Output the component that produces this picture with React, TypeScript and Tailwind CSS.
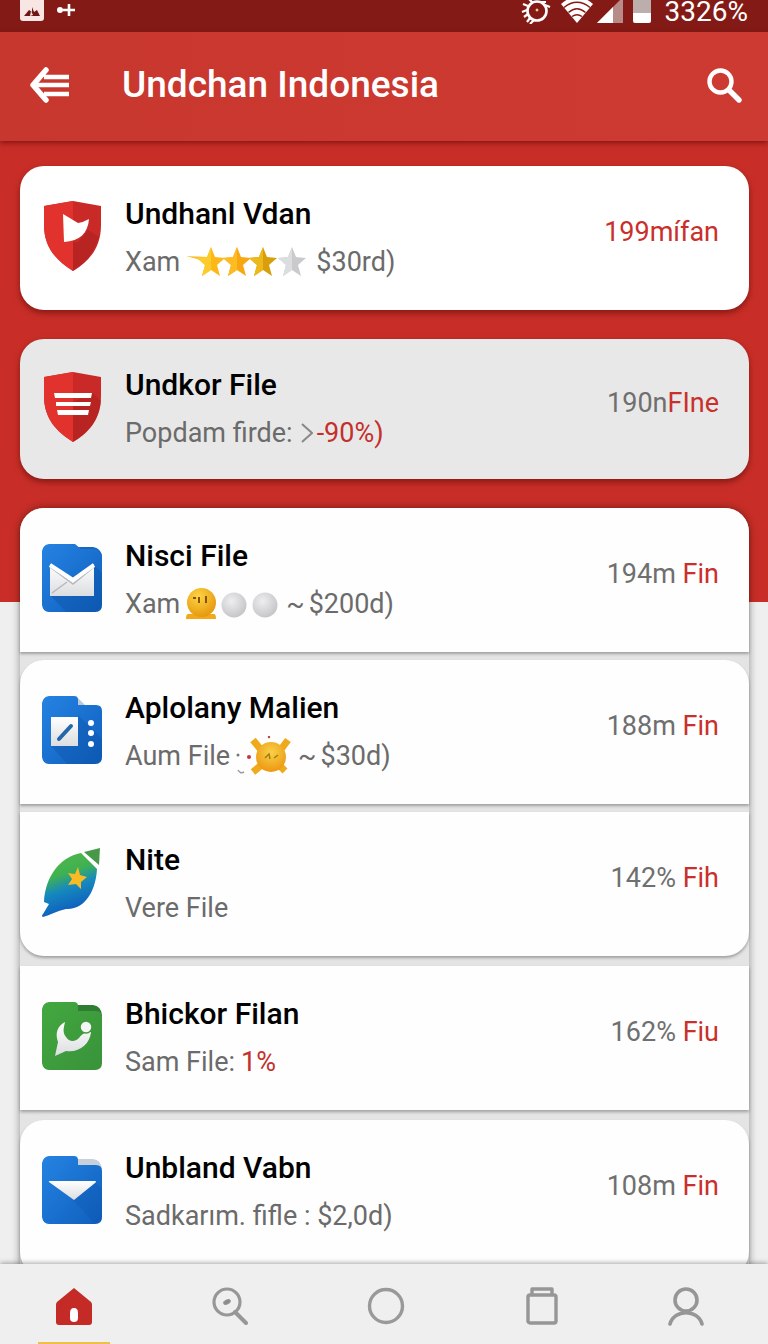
import * as React from 'react';
import { clsx } from 'clsx';

function StatusIcons() {
  return (
    <div className="flex items-start gap-2.5">
      <svg className="h-6 w-[30px]" viewBox="0 0 30 24" fill="none" stroke="#fff" strokeWidth="2.6" aria-hidden="true">
        <circle cx="16" cy="11" r="9.5" />
        <path d="M7 14 L3 17 M6 10 L1 12 M7 6 L2 4 M9 18 L6 22 M12 3 L8 -1 M24 5 L29 7 M20 2 L25 2 M13 20 L9 24" strokeWidth="2.2" />
        <circle cx="16" cy="10" r="1" fill="#ffd9a0" stroke="#ffd9a0" strokeWidth="1" />
      </svg>
      <svg className="h-6 w-8" viewBox="0 0 32 24" fill="none" aria-hidden="true">
        <path d="M0 4 Q16 -10 32 4 L16 23 Z" fill="#fff" />
        <path d="M3 7.5 Q16 -3 29 7.5 M7.5 12.5 Q16 5 24.5 12.5 M11 16.5 Q16 13 21 16.5" stroke="#841a16" strokeWidth="1.5" />
      </svg>
      <svg className="-ml-1.5 h-6 w-[26px]" viewBox="0 0 26 24" aria-hidden="true">
        <path d="M0 23 L26 -3 V23 Z" fill="#b98b88" />
        <path d="M0 23 L16 7 V23 Z" fill="#fff" />
      </svg>
      <svg className="h-6 w-[18px]" viewBox="0 0 18 24" aria-hidden="true">
        <path d="M0 0 H18 V13 H0 Z" fill="#bcaead" />
        <path d="M0 13 H18 V21 Q18 23 16 23 H2 Q0 23 0 21 Z" fill="#fff" />
      </svg>
    </div>
  );
}

function ShieldIcon({ variant }: { variant: 'flag' | 'lines' }) {
  return (
    <svg className="h-[72px] w-[60px]" viewBox="0 0 60 72" aria-hidden="true">
      <path d="M31 1 L59 6 V25 C59 49 46 62 31 71 C15 61 2 48 2 25 V6 Z" fill="#c92a27" />
      <path d="M31 1 L2 6 V25 C2 48 15 61 31 71 Z" fill="#e2322e" />
      {variant === 'flag' ? (
        <>
          <path d="M36 42 L46 30 L57 37 C52 53 44 63 31 71 V42 Z" fill="#ab211f" opacity=".6" />
          <path d="M21 14 L36 23 Q42 22 47 19 C46 33 38 41 22 42 Z" fill="#fff" />
        </>
      ) : (
        <>
          <path d="M31 31 L51 22 L59 30 C57 50 46 62 31 71 Z" fill="#ab211f" opacity=".6" />
          <path d="M12 22 H50 L49 27 H13 Z M14 31 H49 L48 35 H14 Z M15 39 H47 L46 44 H16 Z" fill="#fff" />
        </>
      )}
    </svg>
  );
}

function FolderIcon({ variant }: { variant: 'mail' | 'edit' | 'call' | 'drop' }) {
  const green = variant === 'call';
  const id = `folder-${variant}`;
  return (
    <svg className="h-[70px] w-[60px]" viewBox="0 0 60 70" aria-hidden="true">
      <defs>
        <linearGradient id={id} x1="0" y1="0" x2="1" y2="1">
          <stop offset="0" stopColor={green ? '#43a83f' : '#2583e2'} />
          <stop offset="1" stopColor={green ? '#38923a' : '#0f5fbd'} />
        </linearGradient>
        <linearGradient id={`${id}-paper`} x1="0" y1="0" x2="0" y2="1">
          <stop offset="0" stopColor="#fff" />
          <stop offset="1" stopColor="#dcdde0" />
        </linearGradient>
      </defs>
      {variant === 'edit' ? (
        <path d="M34 1 L43 10 H34 Z" fill="#b9c9da" />
      ) : (
        <path
          d="M34 4 H51 Q59 5 60 14 V20 H34 Z"
          fill={variant === 'drop' ? '#c8d0da' : green ? '#2f7d31' : '#1767bd'}
        />
      )}
      <path
        d={
          variant === 'mail'
            ? 'M7 1 H33 L39 6 H53 Q60 7 60 14 V62 Q60 69 53 69 H7 Q1 69 0 62 V8 Q1 2 7 1 Z'
            : 'M7 1 H32 Q36 1 36 5 V10 H54 Q60 10 60 16 V62 Q60 69 53 69 H7 Q1 69 0 62 V8 Q1 2 7 1 Z'
        }
        fill={`url(#${id})`}
      />
      {variant === 'mail' && (
        <>
          <path d="M9 53 L24 69 H53 Q60 69 60 62 V30 L52 22 V53 Z" fill="#0b4d9f" opacity=".35" />
          <path d="M8 21 L31 37 L52 21 V53 H8 Z" fill={`url(#${id}-paper)`} />
          <path d="M10 50 L25 39 M8 24 L31 41 L52 24" stroke="#b6b8bd" strokeWidth="1.5" fill="none" />
          <path d="M8 22 L31 37 L52 22" stroke="#fff" strokeWidth="4" fill="none" />
        </>
      )}
      {variant === 'edit' && (
        <>
          <path d="M9 51 L25 69 H53 Q60 69 60 62 V44 L36 20 V51 Z" fill="#0b4d9f" opacity=".3" />
          <path d="M9 22 H36 V51 H9 Z" fill={`url(#${id}-paper)`} />
          <path d="M17 44 L29 31" stroke="#2466aa" strokeWidth="4" strokeLinecap="round" />
          <g fill="#fff">
            <circle cx="49" cy="28" r="3" />
            <circle cx="49" cy="38" r="3" />
            <circle cx="49" cy="49" r="3" />
          </g>
        </>
      )}
      {variant === 'call' && (
        <>
          <path d="M23 21 C15 25 13 33 16 41 L13 55 L24 50 C37 52 48 43 49 31 C43 31 41 32 37 37 C33 41 27 41 24 36 C20 31 22 26 23 21 Z" fill={`url(#${id}-paper)`} />
          <circle cx="44" cy="26" r="6" fill="#f4f5f5" stroke="#3d9a3c" strokeWidth="1.5" />
        </>
      )}
      {variant === 'drop' && (
        <>
          <path d="M31 45 L54 28 L60 34 V62 Q60 69 53 69 L31 45 Z" fill="#0b4d9f" opacity=".2" />
          <path d="M7 27 Q6 26 8 26 H53 Q55 26 53 28 L32 45 Z" fill={`url(#${id}-paper)`} />
        </>
      )}
    </svg>
  );
}

function LeafIcon() {
  return (
    <svg className="h-[70px] w-[60px]" viewBox="0 0 60 70" aria-hidden="true">
      <defs>
        <linearGradient id="leaf" x1=".3" y1="0" x2=".6" y2="1">
          <stop offset="0" stopColor="#52b748" />
          <stop offset=".32" stopColor="#3fb152" />
          <stop offset=".55" stopColor="#1689be" />
          <stop offset="1" stopColor="#0c51bd" />
        </linearGradient>
      </defs>
      <path d="M39 6 L55 22 C54 42 44 63 24 62 C15 64 8 68 1 70 Q-1 69 1 67 L7 57 L2 55 C3 31 17 10 39 6 Z" fill="url(#leaf)" />
      <path d="M42 5 L58 1 L57 18 Z" fill="#48984a" />
      <path d="M36 20 L38 28 L45 30 L39 35 L39 42 L34 37 L26 38 L30 32 L26 26 L33 27 Z" fill="#f8bb25" />
    </svg>
  );
}

function Stars() {
  const star = 'M14 0 L18 10 L28 11 L20 18 L23 29 L14 23 L5 29 L8 18 L0 11 L10 10 Z';
  return (
    <svg className="mr-2 ml-1.5 h-[30px] w-[122px]" viewBox="0 0 122 30" role="img" aria-label="3 of 4 stars">
      <path d="M0 9 L22 10 L18 14 Z" fill="#fbc02d" />
      <g transform="translate(11 0)">
        <path d={star} fill="#fbb817" />
        <path d="M14 0 L14 23 L5 29 L8 18 L0 11 L10 10 Z" fill="#fecb2c" />
      </g>
      <g transform="translate(37 0)">
        <path d={star} fill="#f9a711" />
        <path d="M14 0 L14 23 L5 29 L8 18 L0 11 L10 10 Z" fill="#fdbb24" />
      </g>
      <g transform="translate(63 0)">
        <path d={star} fill="#d99e0b" />
        <path d="M14 0 L14 23 L5 29 L8 18 L0 11 L10 10 Z" fill="#ecb81b" />
      </g>
      <g transform="translate(92 0)">
        <path d={star} fill="#c9cacc" />
        <path d="M14 0 L14 23 L5 29 L8 18 L0 11 L10 10 Z" fill="#dcdddf" />
      </g>
    </svg>
  );
}

function FaceAndDots() {
  return (
    <svg className="mr-2 ml-1.5 h-8 w-[92px]" viewBox="0 0 92 32" aria-hidden="true">
      <defs>
        <radialGradient id="face" cx=".4" cy=".3" r=".8">
          <stop offset="0" stopColor="#fdd545" />
          <stop offset="1" stopColor="#e39008" />
        </radialGradient>
        <radialGradient id="dot" cx=".4" cy=".35" r=".7">
          <stop offset="0" stopColor="#eeeef0" />
          <stop offset="1" stopColor="#c3c3c7" />
        </radialGradient>
      </defs>
      <path d="M2 26 H28 Q30 26 30 31 H0 Q0 26 2 26 Z" fill="#f2a81c" />
      <circle cx="15.5" cy="14.5" r="14.5" fill="url(#face)" />
      <path d="M7 10 H10 M13 9 V15 M20 8 V15" stroke="#8a5208" strokeWidth="2" />
      <circle cx="48" cy="17" r="12.5" fill="url(#dot)" />
      <circle cx="79" cy="17" r="12.5" fill="url(#dot)" />
    </svg>
  );
}

function Critter() {
  return (
    <svg className="mr-1.5 ml-1.5 h-10 w-14" viewBox="0 0 56 40" aria-hidden="true">
      <defs>
        <radialGradient id="critter" cx=".5" cy=".35" r=".7">
          <stop offset="0" stopColor="#f7d24a" />
          <stop offset="1" stopColor="#ee920c" />
        </radialGradient>
      </defs>
      <path d="M17 4 L30 20 M52 4 L40 20 M17 36 L29 26 M49 35 L40 26" stroke="#efaa1c" strokeWidth="7" />
      <circle cx="35" cy="21" r="15" fill="url(#critter)" />
      <path d="M29 22 L33 18 L34 23 M38 22 L42 19" stroke="#a97c0b" strokeWidth="1.5" fill="none" />
      <circle cx="13" cy="21" r="2" fill="#c8304b" />
      <circle cx="33" cy="1" r="1.2" fill="#b7453b" />
      <circle cx="2" cy="19" r="1.5" fill="#777" />
      <path d="M2 34 Q4 38 8 36" stroke="#999" strokeWidth="1.5" fill="none" />
    </svg>
  );
}

type Row = {
  title: string;
  icon: React.ReactNode;
  detail: React.ReactNode;
  amount: string;
  unit: string;
};

const featured: Row[] = [
  {
    title: 'Undhanl Vdan',
    icon: <ShieldIcon variant="flag" />,
    detail: (
      <>
        Xam <Stars /> $30rd)
      </>
    ),
    amount: '',
    unit: '199mífan',
  },
  {
    title: 'Undkor File',
    icon: <ShieldIcon variant="lines" />,
    detail: (
      <>
        Popdam firde:
        <svg className="mr-1 ml-2 h-6 w-3" viewBox="0 0 12 24" fill="none" stroke="#888" strokeWidth="2" aria-hidden="true">
          <path d="M1 3 L11 12 L1 21" />
        </svg>
        <span className="text-[#c4302b]">-90%)</span>
      </>
    ),
    amount: '190n',
    unit: 'FIne',
  },
];

const files: Row[] = [
  {
    title: 'Nisci File',
    icon: <FolderIcon variant="mail" />,
    detail: (
      <>
        Xam <FaceAndDots /> <span className="mr-1">~</span>$200d)
      </>
    ),
    amount: '194m',
    unit: 'Fin',
  },
  {
    title: 'Aplolany Malien',
    icon: <FolderIcon variant="edit" />,
    detail: (
      <>
        Aum File <Critter />
        <span className="mr-1">~</span>$30d)
      </>
    ),
    amount: '188m',
    unit: 'Fin',
  },
  { title: 'Nite', icon: <LeafIcon />, detail: 'Vere File', amount: '142%', unit: 'Fih' },
  {
    title: 'Bhickor Filan',
    icon: <FolderIcon variant="call" />,
    detail: (
      <>
        Sam File:<span className="ml-1.5 text-[#c4302b]">1%</span>
      </>
    ),
    amount: '162%',
    unit: 'Fiu',
  },
  {
    title: 'Unbland Vabn',
    icon: <FolderIcon variant="drop" />,
    detail: <span>Sadkarım. fifle : $2,0d)</span>,
    amount: '108m',
    unit: 'Fin',
  },
];

// the last card runs on below the bottom bar
const fileShapes = [
  'min-h-36 rounded-t-3xl',
  'min-h-36 rounded-t-3xl',
  'min-h-36 rounded-b-3xl',
  'min-h-36 mt-2.5',
  'min-h-[156px] mt-2.5 -mb-3 pb-3 rounded-3xl',
];

function Card({ row, className }: { row: Row; className?: string }) {
  return (
    <li className={clsx('flex items-center pr-[30px] pl-[22px]', className)}>
      <div className="mb-1 shrink-0">{row.icon}</div>
      <div className="ml-[23px] min-w-0 flex-1">
        <h2 className="text-[30px] leading-12 font-medium text-black">{row.title}</h2>
        <p className="flex items-center text-[27px] leading-12 whitespace-nowrap text-[#6b6b6b]">{row.detail}</p>
      </div>
      <p className="mb-3 text-[27px] leading-8 whitespace-nowrap text-[#c9302c]">
        {row.amount && <span className="text-[#6f6f6f]">{row.amount}</span>}
        {row.amount && row.unit !== 'FIne' && ' '}
        {row.unit}
      </p>
    </li>
  );
}

function BottomNav() {
  const item = 'flex h-20 w-20 flex-col items-center justify-center';
  return (
    <nav className="z-10 flex h-20 shrink-0 items-center justify-between bg-[#efefef] pr-[54px] pl-[34px] shadow-[0_-1px_5px_rgba(0,0,0,0.35)]">
      <a href="#home" aria-label="Home" className={clsx(item, 'relative')}>
        <svg className="mt-1.5 h-10 w-9" viewBox="0 0 36 40" aria-hidden="true">
          <path d="M18 1 L35 15 Q36 16 36 18 V35 Q36 38 33 38 H3 Q0 38 0 35 V18 Q0 16 1 15 Z" fill="#c52b26" />
          <path d="M14 26 Q14 21 18 21 Q22 21 22 26 V31 Q22 35 18 35 Q14 35 14 31 Z" fill="#fff" />
        </svg>
        <span className="absolute bottom-0 h-0.5 w-[72px] bg-[#eec04a]" />
      </a>
      <a href="#search" aria-label="Search" className={item}>
        <svg className="mt-1 h-10 w-9" viewBox="0 0 36 40" fill="none" stroke="#979797" strokeWidth="3.2" strokeLinecap="round" aria-hidden="true">
          <circle cx="15" cy="16" r="13" />
          <path d="M23 26 L34 37" strokeWidth="4" />
          <ellipse cx="15" cy="16" rx="3.5" ry="2" transform="rotate(-25 15 16)" fill="#8a8a8a" strokeWidth="1" />
        </svg>
      </a>
      <a href="#discover" aria-label="Discover" className={item}>
        <svg className="mt-1 h-10 w-10" viewBox="0 0 40 40" fill="none" stroke="#999" strokeWidth="3.4" aria-hidden="true">
          <circle cx="20" cy="20" r="16.5" />
        </svg>
      </a>
      <a href="#library" aria-label="Library" className={item}>
        <svg className="mt-1 h-10 w-9" viewBox="0 0 36 40" fill="none" stroke="#969696" strokeWidth="3.4" strokeLinejoin="round" aria-hidden="true">
          <rect x="4" y="9" width="28" height="28" rx="2" />
          <path d="M8 9 V3 H28 V9" />
        </svg>
      </a>
      <a href="#profile" aria-label="Profile" className="flex h-20 w-14 items-center justify-center">
        <svg className="mt-1 h-10 w-10" viewBox="0 0 40 40" fill="none" stroke="#969696" strokeWidth="3.6" strokeLinecap="round" aria-hidden="true">
          <circle cx="20" cy="14" r="11" />
          <path d="M4 38 C8 23 32 23 36 38" />
        </svg>
      </a>
    </nav>
  );
}

export default function App() {
  return (
    <div className="flex min-h-screen flex-col bg-[#efefef] font-['Roboto',sans-serif]">
      <div className="flex h-8 items-start justify-between bg-[#841a16] px-5 text-white">
        <div className="flex items-start gap-3">
          <svg className="h-[21px] w-6" viewBox="0 0 24 21" aria-hidden="true">
            <path d="M0 0 H24 V18 Q24 21 21 21 H3 Q0 21 0 18 Z" fill="#f7e6e4" />
            <path d="M4 16 L9 10 L12 12 V7 L14 12 L17 10 L20 16 Z" fill="#701713" />
            <path d="M10 16 L11 11 L13 15 Z" fill="#f7e6e4" />
          </svg>
          <svg className="h-5 w-5" viewBox="0 0 20 20" aria-hidden="true">
            <circle cx="4" cy="10" r="3" fill="#fff" />
            <path d="M13 4 V16 M7 10 H19" stroke="#fff" strokeWidth="2.6" />
          </svg>
        </div>
        <div className="flex items-start gap-3.5">
          <StatusIcons />
          <span className="text-[28px] leading-6">3326%</span>
        </div>
      </div>

      <header className="z-10 flex h-[109px] items-center bg-linear-to-r from-[#c8372e] to-[#cd3a31] pr-[26px] pb-1 pl-[30px] text-white shadow-[0_2px_5px_rgba(90,0,0,0.6)]">
        <button type="button" aria-label="Back" className="shrink-0">
          <svg className="h-9 w-10" viewBox="0 0 40 36" fill="none" stroke="#fff" strokeWidth="4.6" aria-hidden="true">
            <path d="M16 3 L3 18 L16 33" strokeWidth="5.5" strokeLinecap="round" strokeLinejoin="round" />
            <path d="M14 10 H39 M4 18 H39 M14 27 H39" />
          </svg>
        </button>
        <h1 className="ml-[52px] flex-1 text-[37px] leading-12 font-medium">Undchan Indonesia</h1>
        <button type="button" aria-label="Search" className="shrink-0">
          <svg className="h-9 w-9" viewBox="0 0 36 36" fill="none" stroke="#fff" strokeLinecap="round" aria-hidden="true">
            <circle cx="14.5" cy="14.5" r="11" strokeWidth="4.4" />
            <path d="M23 23 L33 33" strokeWidth="5.4" />
          </svg>
        </button>
      </header>

      <main className="flex-1 overflow-hidden bg-[linear-gradient(to_bottom,#c82e27_461px,#efefef_461px)] pt-[25px] pr-[19px] pl-5">
        <ul className="space-y-[29px]">
          {featured.map((row, i) => (
            <Card
              key={row.title}
              row={row}
              className={clsx(
                'rounded-3xl shadow-[0_3px_6px_rgba(70,0,0,0.5)]',
                i === 1 ? 'min-h-[140px] bg-[#e8e8e8]' : 'min-h-36 bg-white'
              )}
            />
          ))}
        </ul>
        <ul className="mt-[29px] space-y-2 rounded-t-3xl bg-[#e4e4e4] shadow-[0_0_8px_rgba(0,0,0,0.4)]">
          {files.map((row, i) => (
            <Card key={row.title} row={row} className={clsx('bg-[#fefefe] shadow-[0_2px_3px_rgba(0,0,0,0.3)]', fileShapes[i])} />
          ))}
        </ul>
      </main>

      <BottomNav />
    </div>
  );
}
